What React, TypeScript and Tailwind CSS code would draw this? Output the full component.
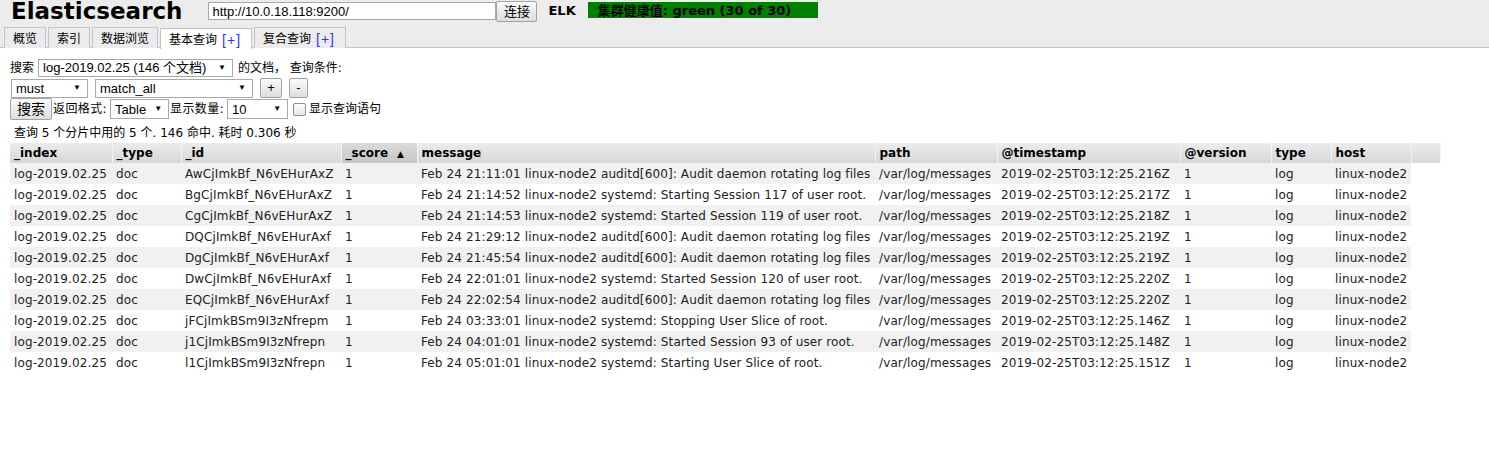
import React from 'react';

type Row = {
  index: string;
  type: string;
  id: string;
  score: string;
  message: string;
  path: string;
  timestamp: string;
  version: string;
  docType: string;
  host: string;
};

const rows: Row[] = [
  ['AwCjImkBf_N6vEHurAxZ', 'Feb 24 21:11:01 linux-node2 auditd[600]: Audit daemon rotating log files', '2019-02-25T03:12:25.216Z'],
  ['BgCjImkBf_N6vEHurAxZ', 'Feb 24 21:14:52 linux-node2 systemd: Starting Session 117 of user root.', '2019-02-25T03:12:25.217Z'],
  ['CgCjImkBf_N6vEHurAxZ', 'Feb 24 21:14:53 linux-node2 systemd: Started Session 119 of user root.', '2019-02-25T03:12:25.218Z'],
  ['DQCjImkBf_N6vEHurAxf', 'Feb 24 21:29:12 linux-node2 auditd[600]: Audit daemon rotating log files', '2019-02-25T03:12:25.219Z'],
  ['DgCjImkBf_N6vEHurAxf', 'Feb 24 21:45:54 linux-node2 auditd[600]: Audit daemon rotating log files', '2019-02-25T03:12:25.219Z'],
  ['DwCjImkBf_N6vEHurAxf', 'Feb 24 22:01:01 linux-node2 systemd: Started Session 120 of user root.', '2019-02-25T03:12:25.220Z'],
  ['EQCjImkBf_N6vEHurAxf', 'Feb 24 22:02:54 linux-node2 auditd[600]: Audit daemon rotating log files', '2019-02-25T03:12:25.220Z'],
  ['jFCjImkBSm9I3zNfrepm', 'Feb 24 03:33:01 linux-node2 systemd: Stopping User Slice of root.', '2019-02-25T03:12:25.146Z'],
  ['j1CjImkBSm9I3zNfrepn', 'Feb 24 04:01:01 linux-node2 systemd: Started Session 93 of user root.', '2019-02-25T03:12:25.148Z'],
  ['l1CjImkBSm9I3zNfrepn', 'Feb 24 05:01:01 linux-node2 systemd: Starting User Slice of root.', '2019-02-25T03:12:25.151Z'],
].map(([id, message, timestamp]) => ({
  index: 'log-2019.02.25',
  type: 'doc',
  id,
  score: '1',
  message,
  path: '/var/log/messages',
  timestamp,
  version: '1',
  docType: 'log',
  host: 'linux-node2',
}));

const columns = [
  { label: '_index', w: 'w-[102px]' },
  { label: '_type', w: 'w-[69px]' },
  { label: '_id', w: 'w-[160px]' },
  { label: '_score', w: 'w-[76px]', sorted: true },
  { label: 'message', w: 'w-[458px]' },
  { label: 'path', w: 'w-[122px]' },
  { label: '@timestamp', w: 'w-[183px]' },
  { label: '@version', w: 'w-[91px]' },
  { label: 'type', w: 'w-[60px]' },
  { label: 'host', w: 'w-[80px]' },
];

const ctl = "font-['Liberation_Sans','Noto_Sans_CJK_SC',sans-serif] text-[13px]";

function FakeSelect({ value, className = '' }: { value: string; className?: string }) {
  return (
    <div
      className={`flex items-center justify-between border border-[#a9a9a9] bg-white pl-[4px] pr-[6px] text-black ${ctl} ${className}`}
    >
      <span className="whitespace-nowrap leading-none">{value}</span>
      <span className="text-[8px] leading-none">▼</span>
    </div>
  );
}

function Btn({ children, className = '' }: { children: React.ReactNode; className?: string }) {
  return (
    <div
      className={`flex items-center justify-center rounded-[2px] border border-[#a3a3a3] bg-gradient-to-b from-[#fafafa] to-[#dedede] text-black ${ctl} ${className}`}
    >
      {children}
    </div>
  );
}

function Tab({ label, plus, active }: { label: string; plus?: boolean; active?: boolean }) {
  return (
    <div
      className={`flex h-[21px] items-center border border-b-0 border-[#c4c4c4] px-[8px] pt-[2px] text-[12px] leading-none ${
        active ? 'relative top-[1px] bg-white' : 'bg-[#ececec]'
      }`}
    >
      <span>{label}</span>
      {plus && (
        <span className="ml-[5px] mr-[2px] font-['Liberation_Sans',sans-serif] text-[14px] tracking-[1px] text-[#3333ff]">[+]</span>
      )}
    </div>
  );
}

export default function App() {
  return (
    <div className="min-h-[472px] w-[1489px] bg-white font-['DejaVu_Sans','Noto_Sans_CJK_SC',sans-serif] text-[12px] text-black">
      {/* header bar */}
      <div className="h-[48px] border-b border-[#c4c4c4] bg-[#ececec]">
        <div className="flex h-[27px] items-start">
          <h1 className="ml-[11px] mt-[-2px] text-[23px] font-bold leading-[27px]">Elasticsearch</h1>
          <div className="ml-[26px] mt-[2px] flex h-[18px] w-[288px] items-center border border-[#a9a9a9] bg-white pl-[3px]">
            <span className={`${ctl} leading-none`}>http://10.0.18.118:9200/</span>
          </div>
          <Btn className="mt-[1px] h-[21px] w-[41px]">连接</Btn>
          <span className="ml-[11px] mt-[3px] text-[13px] font-bold leading-[16px]">ELK</span>
          <div className="ml-[12px] mt-[2px] flex h-[16px] w-[230px] items-center bg-[#008000] pl-[10px]">
            <span className="whitespace-nowrap text-[13px] font-bold leading-none">集群健康值: green (30 of 30)</span>
          </div>
        </div>
        <div className="flex gap-[2px] pl-[4px]">
          <Tab label="概览" />
          <Tab label="索引" />
          <Tab label="数据浏览" />
          <Tab label="基本查询" plus active />
          <Tab label="复合查询" plus />
        </div>
      </div>

      {/* query builder */}
      <div className="pl-[10px] pt-[10px]">
        <div className="flex h-[19px] items-center">
          <span className="mr-[4px]">搜索</span>
          <FakeSelect value="log-2019.02.25 (146 个文档)" className="h-[18px] w-[195px]" />
          <span className="ml-[5px] whitespace-pre">的文档， 查询条件:</span>
        </div>
        <div className="mt-[1px] flex h-[20px] items-center">
          <FakeSelect value="must" className="ml-[1px] h-[19px] w-[77px]" />
          <FakeSelect value="match_all" className="ml-[7px] h-[19px] w-[158px]" />
          <Btn className="ml-[7px] h-[20px] w-[22px]">+</Btn>
          <Btn className="ml-[7px] h-[20px] w-[19px]">-</Btn>
        </div>
        <div className="flex h-[22px] items-center">
          <Btn className="h-[22px] w-[42px] text-[14px]">搜索</Btn>
          <span className="ml-[1px] tracking-[0.4px]">返回格式:</span>
          <FakeSelect value="Table" className="ml-[3px] h-[20px] w-[59px]" />
          <span className="ml-[1px] tracking-[0.4px]">显示数量:</span>
          <FakeSelect value="10" className="ml-[3px] h-[20px] w-[61px]" />
          <div className="ml-[5px] h-[13px] w-[13px] rounded-[2px] border border-[#8f8f8f] bg-gradient-to-b from-[#fcfcfc] to-[#e6e6e6]" />
          <span className="ml-[3px]">显示查询语句</span>
        </div>
        <div className="ml-[4px] mt-[4px] h-[19px] leading-[18px]">查询 5 个分片中用的 5 个. 146 命中. 耗时 0.306 秒</div>

        {/* results */}
        <table className="border-collapse">
          <thead>
            <tr>
              {columns.map((c) => (
                <th
                  key={c.label}
                  className={`${c.w} h-[20px] border-r border-[#f4f4f4] pl-[4px] text-left align-middle text-[12px] font-bold ${
                    c.sorted
                      ? 'bg-gradient-to-b from-[#dadada] to-[#c6c6c6]'
                      : 'bg-gradient-to-b from-[#ebebeb] to-[#d7d7d7]'
                  }`}
                >
                  {c.label}
                  {c.sorted && <span className="ml-[9px] text-[9px]">▲</span>}
                </th>
              ))}
              <th className="h-[20px] w-[29px] border-r border-[#f4f4f4] bg-gradient-to-b from-[#ebebeb] to-[#d7d7d7]" />
            </tr>
          </thead>
          <tbody>
            {rows.map((r, i) => {
              const bg = i % 2 === 0 ? 'bg-[#f1f1f1]' : 'bg-white';
              const cells = [r.index, r.type, r.id, r.score, r.message, r.path, r.timestamp, r.version, r.docType, r.host];
              return (
                <tr key={r.id}>
                  {cells.map((v, j) => (
                    <td
                      key={j}
                      className={`${bg} h-[21px] whitespace-nowrap pl-[4px] align-middle leading-none tracking-[0.12px] text-[#222]`}
                    >
                      {v}
                    </td>
                  ))}
                </tr>
              );
            })}
          </tbody>
        </table>
      </div>
    </div>
  );
}
